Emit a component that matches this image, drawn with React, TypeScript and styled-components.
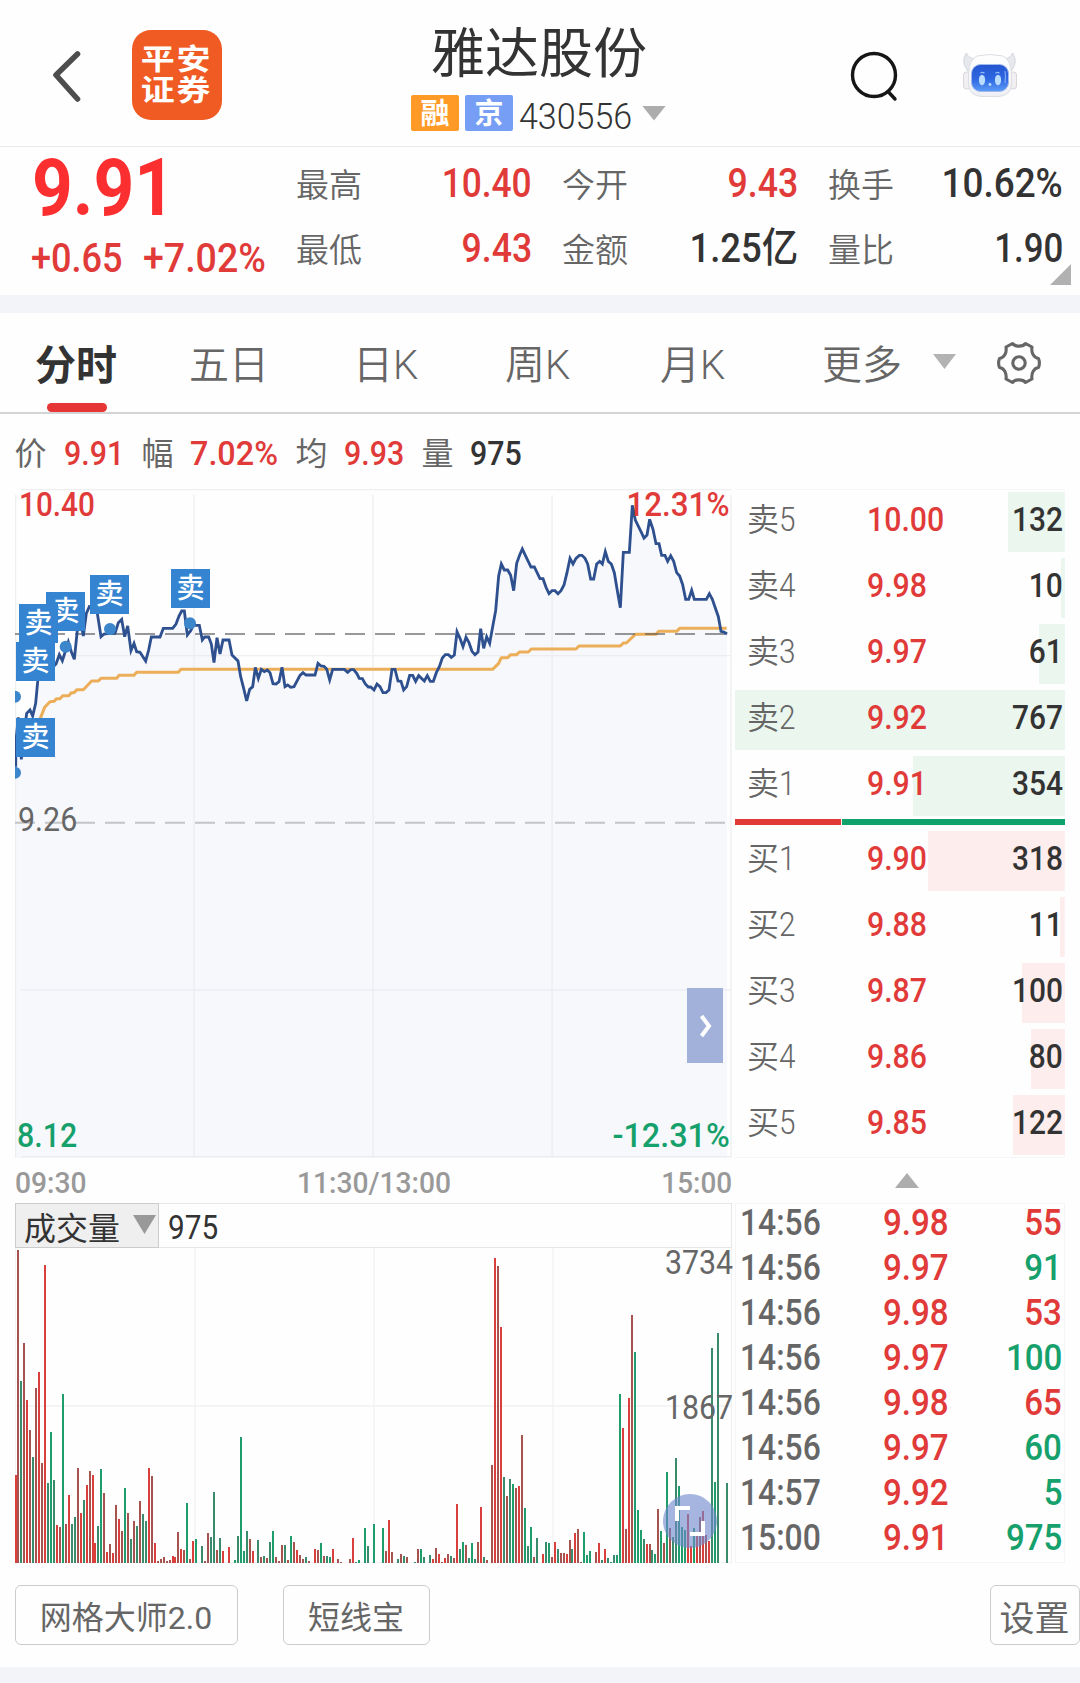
import React from 'react';
import styled, { createGlobalStyle } from 'styled-components';

const RED = '#e03a39';
const GREEN = '#16a06b';
const INK = '#333333';
const GREY = '#666666';

const Global = createGlobalStyle`
  * { box-sizing: border-box; }
  body { margin: 0; background: #fefefe; font-family: Roboto, "Noto Sans CJK SC", sans-serif; color: ${INK}; }
  svg { display: block; }
`;

const Page = styled.div`
  width: 1080px;
  height: 1683px;
  display: flex;
  flex-direction: column;
  overflow: hidden;
  background: #fefefe;
`;

const Num = styled.span<{ $size: number; $color?: string; $weight?: number; $origin?: string; $scale?: number }>`
  display: block;
  white-space: nowrap;
  font-size: ${p => p.$size}px;
  line-height: ${p => p.$size}px;
  font-weight: ${p => p.$weight ?? 500};
  color: ${p => p.$color ?? INK};
  transform: scaleX(${p => p.$scale ?? 0.92});
  transform-origin: ${p => p.$origin ?? 'left'} center;
`;

/* ---------- header ---------- */

const Header = styled.header`
  height: 147px;
  flex: none;
  display: grid;
  grid-template-columns: 132px 90px 189px 299px 370px;
  border-bottom: 1px solid #e9e9e9;
`;

const BackCell = styled.div`padding: 47px 0 0 48px;`;

const Logo = styled.div`
  width: 90px;
  height: 90px;
  margin-top: 30px;
  padding-top: 2px;
  border-radius: 19px;
  background: #f05b24;
  display: flex;
  flex-direction: column;
  align-items: center;
  justify-content: center;
`;

const LogoText = styled.div`
  color: #fff;
  font-size: 29px;
  line-height: 31px;
  font-weight: 700;
  letter-spacing: 1.5px;
  white-space: nowrap;
  transform: scaleX(1.17);
`;

const TitleCell = styled.div`
  grid-column: 4;
  display: flex;
  flex-direction: column;
`;

const Title = styled.h1`
  margin: 28px 0 0 20px;
  font-size: 54px;
  line-height: 54px;
  font-weight: 400;
  white-space: nowrap;
`;

const CodeRow = styled.div`
  display: flex;
  height: 36px;
  margin-top: 13px;
  align-items: center;
`;

const Badge = styled.span<{ $bg: string }>`
  width: 48px;
  height: 36px;
  margin-right: 6px;
  border-radius: 2px;
  background: ${p => p.$bg};
  color: #fff;
  font-size: 29px;
  line-height: 39px;
  font-weight: 600;
  text-align: center;
`;

const CodeBox = styled.div`width: 123px; padding-top: 7px;`;

const Triangle = styled.i<{ $w: number; $h: number; $color?: string; $up?: boolean }>`
  display: block;
  flex: none;
  width: ${p => p.$w}px;
  height: ${p => p.$h}px;
  background: ${p => p.$color ?? '#adadad'};
  clip-path: ${p => (p.$up ? 'polygon(50% 0, 100% 100%, 0 100%)' : 'polygon(0 0, 100% 0, 50% 100%)')};
`;

const Actions = styled.div`
  display: flex;
  padding: 50px 0 0 140px;
  gap: 63px;
`;

const BackIcon = () => (
  <svg width="36" height="56" viewBox="0 0 36 56" fill="none">
    <path d="M29.5 7 L8 28 L29.500 52" stroke="#4d4d4d" strokeWidth="5.6" strokeLinecap="round" strokeLinejoin="round" />
  </svg>
);

const SearchIcon = () => (
  <svg width="50" height="54" viewBox="0 0 50 54" fill="none">
    <circle cx="24" cy="25" r="21.5" stroke="#161616" strokeWidth="3.4" />
    <path d="M38.5 42 L45 49" stroke="#161616" strokeWidth="3.4" strokeLinecap="round" />
  </svg>
);

const RobotIcon = () => (
  <svg width="54" height="48" viewBox="0 0 54 48">
    <defs>
      <linearGradient id="face" x1="0" y1="0" x2="0" y2="1">
        <stop offset="0" stopColor="#2355cf" />
        <stop offset="0.55" stopColor="#2f68e2" />
        <stop offset="1" stopColor="#5d9bf6" />
      </linearGradient>
      <linearGradient id="shell" x1="0" y1="0" x2="0" y2="1">
        <stop offset="0" stopColor="#ffffff" />
        <stop offset="1" stopColor="#eef0f4" />
      </linearGradient>
    </defs>
    <path d="M3.500 3 C-0.500 9 0 15 5 21 L14 9 C8 9 5 7 3.500 3Z M49.500 3 C53.500 9 53 15 48 21 L39 9 C45 9 48 7 49.500 3Z" fill="#e6e8ed" stroke="#cdd0d7" strokeWidth="0.9" />
    <rect x="0.500" y="22" width="7" height="17" rx="3" fill="#f1eff2" stroke="#d5d3d8" strokeWidth="0.9" />
    <rect x="46.500" y="22" width="7" height="17" rx="3" fill="#f1eff2" stroke="#d5d3d8" strokeWidth="0.9" />
    <path d="M14 6 Q27 3 40 6 Q48 10 48.500 24 V34 Q48 46 35 46.500 H19 Q6 46 5.500 34 V24 Q6 10 14 6Z" fill="url(#shell)" stroke="#dcdee3" strokeWidth="1" />
    <rect x="8.500" y="14.500" width="37" height="27" rx="9" fill="url(#face)" stroke="#9fb8ee" strokeWidth="1" />
    <ellipse cx="19" cy="30" rx="3.100" ry="5.200" fill="#b9dcff" />
    <ellipse cx="35" cy="30" rx="3.100" ry="5.200" fill="#b9dcff" />
    <path d="M17.500 23.200 q2 -1.500 4 0 M32.500 23.200 q2 -1.500 4 0" stroke="#8fb8fa" strokeWidth="1.200" fill="none" />
    <circle cx="27" cy="34.500" r="1.400" fill="#b9dcff" />
    <path d="M42 21 q1 5 0 12" stroke="#7fa8f2" strokeWidth="1.200" fill="none" />
  </svg>
);

/* ---------- quote summary ---------- */

const Quote = styled.section`
  height: 148px;
  flex: none;
  position: relative;
  display: grid;
  grid-template-columns: 296px 236px 30px 236px 30px 235px;
`;

const PriceCell = styled.div`padding: 2px 0 0 32px;`;

const Change = styled.div`
  display: grid;
  grid-template-columns: 112px 130px;
  margin: 10px 0 0 -1px;
`;

const StatColumn = styled.div`
  display: flex;
  flex-direction: column;
  padding-top: 12px;
`;

const Stat = styled.div`
  height: 65px;
  display: flex;
  justify-content: space-between;
  align-items: flex-start;
`;

const StatLabel = styled.span`
  padding-top: 10px;
  font-size: 33px;
  line-height: 33px;
  font-weight: 350;
  color: ${GREY};
`;

const StatValue = styled.div`padding-top: 4px;`;

const Corner = styled.i`
  position: absolute;
  right: 9px;
  bottom: 10px;
  width: 21px;
  height: 21px;
  background: #b1b1b1;
  clip-path: polygon(100% 0, 100% 100%, 0 100%);
`;

const Band = styled.div<{ $h: number }>`
  height: ${p => p.$h}px;
  flex: none;
  background: #f3f4f9;
`;

/* ---------- tabs ---------- */

const Tabs = styled.nav`
  height: 101px;
  flex: none;
  display: grid;
  grid-template-columns: 154px 167px 149px 155px 163px 144px 64px 84px;
  border-bottom: 2px solid #d4d4d4;
`;

const Tab = styled.div<{ $active?: boolean; $left: number }>`
  display: flex;
  flex-direction: column;
  justify-content: space-between;
  padding: 32px 0 0 ${p => p.$left}px;
  font-size: ${p => (p.$active ? 41 : 40)}px;
  line-height: 42px;
  white-space: nowrap;
  font-weight: ${p => (p.$active ? 700 : 350)};
  color: ${p => (p.$active ? INK : GREY)};
`;

const Underline = styled.i`
  width: 60px;
  height: 9px;
  margin-left: 12px;
  border-radius: 5px;
  background: #e63535;
`;

const TabIcon = styled.div<{ $top: number }>`padding: ${p => p.$top}px 0 0 1px;`;

const GearIcon = () => (
  <svg width="44" height="44" viewBox="0 0 44 44" fill="none" stroke="#666" strokeWidth="3.1" strokeLinejoin="round">
    <path d="M15.500 2.500 C18 6 26 6 28.500 2.500 L35 6 C34 12 37 17 41.500 17.500 C42.500 20 42.500 24 41.500 26.500 C37 27 34 32 35 38 L28.500 41.500 C26 38 18 38 15.500 41.500 L9 38 C10 32 7 27 2.500 26.500 C1.500 24 1.500 20 2.500 17.500 C7 17 10 12 9 6 Z" />
    <circle cx="22" cy="22" r="6.200" />
  </svg>
);

/* ---------- info line ---------- */

const InfoLine = styled.div`
  height: 75px;
  flex: none;
  display: grid;
  grid-template-columns: 49px 78px 48px 106px 48px 78px 48px 100px;
  padding: 23px 0 0 15px;
`;

const InfoLabel = styled.span`
  margin-left: -0.5px;
  font-size: 32px;
  line-height: 34px;
  color: ${GREY};
`;

/* ---------- market body ---------- */

const Body = styled.main`
  height: 1074px;
  flex: none;
  display: grid;
  grid-template-columns: 717px 330px;
  column-gap: 3px;
  padding-left: 15px;
`;

const Column = styled.div`
  display: flex;
  flex-direction: column;
`;

const ChartBox = styled.div`
  position: relative;
  height: 669px;
  flex: none;
`;

const Overlay = styled.div<{ $x?: number; $r?: number; $y: number }>`
  position: absolute;
  ${p => (p.$x !== undefined ? `left: ${p.$x}px;` : `right: ${p.$r}px;`)}
  top: ${p => p.$y}px;
`;

const SellTag = styled.span`
  position: absolute;
  width: 39px;
  height: 39px;
  background: #3484d2;
  color: #fff;
  font-size: 28px;
  line-height: 40px;
  font-weight: 500;
  text-align: center;
`;

const Expander = styled.button`
  position: absolute;
  left: 672px;
  top: 499px;
  width: 36px;
  height: 75px;
  padding: 0 0 0 2px;
  border: 0;
  background: #a1b1d9;
  display: flex;
  align-items: center;
  justify-content: center;
`;

const TimeAxis = styled.div`
  height: 45px;
  flex: none;
  display: flex;
  justify-content: space-between;
  padding: 10px 0 0 0;
`;

const VolumeHead = styled.div`
  height: 45px;
  flex: none;
  width: 717px;
  display: flex;
  align-items: center;
  border: 1px solid #e6e6e6;
  border-left: 0;
`;

const VolumeSelect = styled.div`
  width: 144px;
  height: 45px;
  display: flex;
  padding: 8px 0 0 8px;
  background: #efefef;
  border: 1px solid #cccccc;
  font-size: 32px;
  line-height: 34px;
  white-space: nowrap;
`;

const SelectArrow = styled.div`margin: 3px 0 0 13px;`;

const VolumeValue = styled.div`padding: 4px 0 0 9px;`;

const VolumeBox = styled.div`
  position: relative;
  height: 315px;
  flex: none;
`;

const BookPanel = styled.div`
  height: 669px;
  flex: none;
  border: 1px solid #f5f5f6;
  border-width: 1px 0;
  padding-top: 2px;
`;

const BookRow = styled.div<{ $fill: number; $bg: string }>`
  height: 60px;
  margin-bottom: 6px;
  display: grid;
  grid-template-columns: 132px 100px 96px;
  background: linear-gradient(${p => p.$bg}, ${p => p.$bg}) right / ${p => p.$fill}% 100% no-repeat;
`;

const BookLabel = styled.div`
  padding: 11px 0 0 12px;
  display: flex;
  color: ${GREY};
  font-size: 32px;
  line-height: 34px;
  font-weight: 350;
`;

const BookCell = styled.div<{ $end?: boolean }>`
  padding-top: 10px;
  display: flex;
  justify-content: ${p => (p.$end ? 'flex-end' : 'flex-start')};
`;

const Ratio = styled.div`
  display: grid;
  grid-template-columns: 106px 1fr;
  column-gap: 1px;
  height: 6px;
  margin: -3px 0 6px;
`;

const RatioPart = styled.i<{ $bg: string }>`background: ${p => p.$bg};`;

const Collapse = styled.div`
  height: 45px;
  flex: none;
  padding: 15px 0 0 160px;
`;

const TickPanel = styled.div`
  height: 360px;
  flex: none;
  padding-top: 1px;
  border: 1px solid #f5f5f6;
`;

const Tick = styled.div`
  height: 45px;
  display: grid;
  grid-template-columns: 140px 90px 96px;
`;

const TickCell = styled.div<{ $end?: boolean; $left?: number }>`
  display: flex;
  padding: 0 0 0 ${p => p.$left ?? 0}px;
  justify-content: ${p => (p.$end ? 'flex-end' : 'flex-start')};
`;

/* ---------- footer ---------- */

const Footer = styled.footer`
  height: 104px;
  flex: none;
  display: flex;
  align-items: flex-start;
  padding: 22px 0 0 15px;
`;

const FootButton = styled.button<{ $w: number; $ml?: string; $size?: number; $top?: number }>`
  width: ${p => p.$w}px;
  height: 60px;
  margin: 0 0 0 ${p => p.$ml ?? '0'};
  padding: ${p => p.$top ?? 6}px 1px 0 0;
  border: 1.5px solid #cccccc;
  border-radius: 6px;
  background: #fefefe;
  color: ${GREY};
  font-family: inherit;
  font-size: ${p => p.$size ?? 32}px;
  line-height: 40px;
  white-space: nowrap;
`;

/* ---------- data ---------- */

// Chart coordinates are in thirds of a pixel.
const PRICE =
  '47,860 48,780 55,712 64,838 72,760 80,700 90,690 98,708 107,670 113,605 117,545 130,530 150,556 160,560 168,552 178,524 187,542 205,486 214,515 223,538 232,450 241,420 250,468 259,400 268,380 277,384 292,400 303,470 312,462 327,460 345,460 355,428 365,418 374,470 383,438 393,512 402,490 410,515 420,517 437,543 446,510 454,471 480,471 490,445 518,445 528,432 537,408 545,393 553,393 562,465 572,452 580,436 598,436 607,480 614,471 626,471 634,492 642,548 651,473 660,522 669,480 687,480 696,525 705,534 714,543 722,590 731,625 740,663 749,628 758,620 766,562 775,595 784,568 793,575 802,570 810,578 819,611 828,612 837,605 846,562 855,620 863,615 872,622 882,620 900,586 909,578 918,585 945,585 954,550 963,558 972,559 980,567 989,600 998,568 1033,568 1043,577 1052,569 1061,569 1070,580 1078,595 1087,596 1096,612 1105,621 ' +
  '1112,621 1122,630 1131,612 1140,620 1149,638 1158,638 1167,630 1176,568 1185,568 1194,603 1203,604 1211,630 1220,620 1229,586 1238,586 1247,604 1256,587 1273,603 1282,587 1291,604 1300,604 1309,578 1318,560 1327,534 1336,524 1345,524 1354,532 1363,525 1371,455 1380,475 1389,500 1398,472 1407,488 1416,514 1425,524 1434,516 1442,446 1451,505 1460,470 1469,490 1478,440 1487,392 1496,288 1504,252 1513,270 1523,270 1532,286 1541,332 1550,250 1559,225 1567,207 1576,226 1593,261 1603,261 1620,296 1629,296 1638,322 1647,341 1656,332 1665,332 1674,341 1683,332 1692,315 1701,278 1710,235 1719,252 1728,235 1738,226 1746,226 1755,235 1763,252 1772,297 1781,297 1790,252 1799,244 1807,252 1816,215 1825,244 1834,252 1843,278 1852,332 1861,383 1870,217 1888,217 1897,76 1906,120 1923,155 1932,174 1941,165 1949,118 1959,148 1968,191 1977,191 1985,226 1995,226 2003,244 2012,227 2021,244 2030,278 2039,288 2048,314 2057,358 2066,358 2075,331 2083,358 2119,358 2128,341 2137,358 2146,384 2155,410 2163,454 2172,456 2181,462';

const AVERAGE =
  '112,740 122,712 134,682 150,665 162,664 170,656 180,656 188,647 207,647 214,638 222,638 231,629 250,629 275,603 295,603 303,595 350,595 357,586 402,586 410,577 535,577 543,568 1478,568 1496,550 1504,533 1523,533 1532,524 1550,524 1558,516 1585,516 1594,507 1728,507 1737,498 1861,498 1870,489 1879,489 1906,463 1968,463 1976,454 2030,454 2039,445 2180,445';

const BAR_COLORS: Record<string, string> = { R: '#db3f3b', r: '#a6524f', G: '#1f9d6c', g: '#3a8b6b' };

const BARS =
  '48,1005,R 54,330,r 63,723,g 72,609,r 81,780,R 90,870,r 99,951,g 108,744,r 117,696,R 126,969,r 135,375,R 144,1029,g 153,876,G 162,1020,g 171,1155,R 180,1161,r 189,762,G 198,1152,r 207,1065,R 216,1152,g 225,1131,g 234,984,r 243,1119,R 252,1080,g 261,1035,R 270,993,r 279,1005,R 285,1209,R 294,1158,g 303,987,G 312,1059,r 321,1236,R 330,1212,r 339,1239,R 348,1095,r 357,1137,R 366,1173,r 375,1044,G 384,1119,r 393,1197,g 402,1143,r 411,1158,g 420,1083,r 429,1122,g 438,1143,g 447,984,R 456,1008,r 465,1209,R 474,1263,r 483,1257,r 492,1251,r 501,1263,r 510,1260,r 519,1248,R 525,1251,R 534,1176,r 543,1227,R 552,1230,r 561,1089,G 570,1257,r 579,1203,R 588,1197,G 606,1218,g 615,1263,r 624,1179,r 633,1191,g 642,1056,g 651,1230,r 660,1194,g 669,1233,R 687,1221,R 705,1260,G 714,1188,g 723,891,G 732,1233,G 741,1173,g 750,1197,r 759,1233,R 774,1200,g 783,1251,r 792,1248,g 801,1254,r 810,1206,g 819,1173,G 828,1251,r 837,1263,r 846,1215,r 855,1215,g 864,1260,r 873,1188,G 882,1206,r 891,1230,R 900,1245,r 909,1257,r 918,1251,g 927,1263,r 945,1227,R 954,1230,r 963,1209,G 972,1248,r 981,1248,g 990,1251,G 999,1227,R 1014,1257,r 1023,1266,r 1050,1257,r 1059,1194,R 1068,1266,g 1077,1260,G 1095,1164,G 1104,1218,g ' +
  '1122,1152,G 1149,1164,G 1158,1233,r 1167,1140,R 1176,1236,r 1194,1257,g 1203,1242,r 1212,1248,g 1221,1251,r 1245,1266,g 1254,1227,r 1263,1227,G 1272,1251,g 1290,1245,g 1299,1257,R 1308,1224,r 1317,1242,R 1326,1266,r 1335,1254,R 1344,1242,r 1353,1248,g 1362,1254,r 1371,1092,R 1380,1227,g 1389,1206,G 1398,1215,r 1407,1254,g 1416,1209,G 1425,1257,g 1434,1206,r 1443,1101,R 1452,1251,g 1461,1260,r 1476,975,r 1485,354,R 1494,378,r 1503,561,R 1512,1011,g 1521,1068,r 1530,1017,g 1539,1032,G 1548,1044,r 1557,1038,R 1566,885,r 1575,1104,G 1584,1218,g 1593,1161,G 1602,1251,r 1611,1194,g 1629,1242,R 1638,1206,g 1647,1209,G 1656,1251,r 1665,1206,R 1674,1227,g 1683,1239,r 1692,1239,r 1701,1242,R 1710,1200,r 1716,1227,g 1725,1179,R 1734,1167,r 1743,1266,r 1752,1176,G 1761,1245,G 1770,1233,G 1788,1236,r 1797,1209,R 1806,1260,g 1815,1227,R 1824,1254,g 1833,1266,G 1842,1245,g 1851,1245,G 1860,762,G 1869,864,R 1878,1167,r 1887,774,R 1896,525,r 1905,636,G 1914,1110,G 1923,1170,G 1932,1197,g 1941,1212,R 1950,1212,r 1956,1230,g 1965,1242,G 1974,1107,r 1983,1173,G 1992,1209,r 2001,996,G 2010,1164,r 2019,1191,g 2028,954,g 2037,1038,G 2046,1161,G 2055,1170,G 2064,1122,R 2073,1218,R 2082,1164,G 2091,1188,R 2100,1131,r 2109,1113,R 2118,1185,r 2127,1203,R 2136,624,g 2145,1026,G 2154,579,g 2181,1029,g';

const TAGS: Array<[number, number]> = [
  [31, 104],
  [4, 116],
  [1, 154],
  [1, 230],
  [75, 87],
  [156, 81],
];

const DOTS: Array<[number, number]> = [
  [330, 447],
  [570, 430],
  [197, 500],
  [45, 650],
  [45, 878],
];

const MAX_LOT = 767;
const ASKS: Array<[string, string, number]> = [
  ['5', '10.00', 132],
  ['4', '9.98', 10],
  ['3', '9.97', 61],
  ['2', '9.92', 767],
  ['1', '9.91', 354],
];
const BIDS: Array<[string, string, number]> = [
  ['1', '9.90', 318],
  ['2', '9.88', 11],
  ['3', '9.87', 100],
  ['4', '9.86', 80],
  ['5', '9.85', 122],
];
const TICKS: Array<[string, string, string, string]> = [
  ['14:56', '9.98', '55', RED],
  ['14:56', '9.97', '91', GREEN],
  ['14:56', '9.98', '53', RED],
  ['14:56', '9.97', '100', GREEN],
  ['14:56', '9.98', '65', RED],
  ['14:56', '9.97', '60', GREEN],
  ['14:57', '9.92', '5', GREEN],
  ['15:00', '9.91', '975', GREEN],
];

const STATS: Array<Array<[string, string, string, number]>> = [
  [['最高', '10.40', RED, 0.86], ['最低', '9.43', RED, 0.87]],
  [['今开', '9.43', RED, 0.87], ['金额', '1.25亿', INK, 0.89]],
  [['换手', '10.62%', INK, 0.9], ['量比', '1.90', INK, 0.85]],
];

const PriceChart = () => (
  <svg width="717" height="669" viewBox="0 0 2151 2007">
    <g transform="translate(-45 -27)">
      <path d={`M47,2054 L${PRICE.replace(/ /g, ' L')} L2181,2054 Z`} fill="#f6f8fc" />
      <path d="M63 28.500 H2195 M46.500 45 V2054 M582 45 V2054 M1119 45 V2054 M1656 45 V2054 M2193 45 V2054 M63 527 H2195 M63 1530 H2195 M63 2030 H2195" stroke="#e9eaee" strokeOpacity="0.75" strokeWidth="4" fill="none" />
      <path d="M45 1028.500 H2178" stroke="#c3c4c7" strokeWidth="6" strokeDasharray="60 30" />
      <polyline points={AVERAGE} fill="none" stroke="#ecae58" strokeWidth="9" strokeLinejoin="round" />
      <path d="M45 462 H2178" stroke="#58585c" strokeOpacity="0.62" strokeWidth="6" strokeDasharray="60 30" />
      <polyline points={PRICE} fill="none" stroke="#2f508f" strokeWidth="8.500" strokeLinejoin="miter" />
      {DOTS.map(([x, y]) => (
        <circle key={`${x}-${y}`} cx={x} cy={y} r="18" fill="#3c86cb" />
      ))}
    </g>
  </svg>
);

const VolumeChart = () => (
  <svg width="717" height="315" viewBox="0 0 2151 945">
    <g transform="translate(-45 -324)">
      <path d="M585 324 V1269 M1122 324 V1269 M1659 324 V1269 M2194 324 V1269 M46 324 V1269 M46 798 H2194 M46 1268 H2194" stroke="#f2f2f3" strokeWidth="4" fill="none" />
      {BARS.split(' ').map((b) => {
        const [x, y, c] = b.split(',');
        return <rect key={x} x={Number(x) - 3} y={y} width="6" height={1269 - Number(y)} fill={BAR_COLORS[c]} />;
      })}
      <circle cx="2070" cy="1143" r="81" fill="#7088cb" fillOpacity="0.62" />
      <path d="M2031 1143 V1104 H2070 M2070 1182 H2109 V1143" fill="none" stroke="#fff" strokeWidth="12" />
    </g>
  </svg>
);

const Book = ({ side, rows, bg }: { side: string; rows: Array<[string, string, number]>; bg: string }) => (
  <>
    {rows.map(([level, price, lots]) => (
      <BookRow key={level} $fill={Math.max(1.2, (lots / MAX_LOT) * 100)} $bg={bg}>
        <BookLabel>
          {side}
          <Num $size={33} $weight={350} $color={GREY} $scale={0.9}>{level}</Num>
        </BookLabel>
        <BookCell><Num $size={34} $color={RED} $scale={0.89}>{price}</Num></BookCell>
        <BookCell $end><Num $size={34} $origin="right" $scale={0.88}>{lots}</Num></BookCell>
      </BookRow>
    ))}
  </>
);

export default function App() {
  return (
    <Page>
      <Global />
      <Header>
        <BackCell><BackIcon /></BackCell>
        <Logo>
          <LogoText>平安</LogoText>
          <LogoText>证券</LogoText>
        </Logo>
        <TitleCell>
          <Title>雅达股份</Title>
          <CodeRow>
            <Badge $bg="#ff9a26">融</Badge>
            <Badge $bg="#769ef5">京</Badge>
            <CodeBox><Num $size={36} $weight={350} $scale={0.945}>430556</Num></CodeBox>
            <Triangle $w={24} $h={15} />
          </CodeRow>
        </TitleCell>
        <Actions>
          <SearchIcon />
          <RobotIcon />
        </Actions>
      </Header>

      <Quote>
        <PriceCell>
          <Num $size={79} $weight={700} $color="#fb2f2f" $scale={0.9}>9.91</Num>
          <Change>
            <Num $size={41} $color={RED} $scale={0.88}>+0.65</Num>
            <Num $size={41} $color={RED} $scale={0.915}>+7.02%</Num>
          </Change>
        </PriceCell>
        {STATS.map((column, i) => (
          <React.Fragment key={i}>
            {i > 0 && <span />}
            <StatColumn>
              {column.map(([label, value, color, scale]) => (
                <Stat key={label}>
                  <StatLabel>{label}</StatLabel>
                  <StatValue><Num $size={41} $color={color} $origin="right" $scale={scale}>{value}</Num></StatValue>
                </Stat>
              ))}
            </StatColumn>
          </React.Fragment>
        ))}
        <Corner />
      </Quote>

      <Band $h={18} />

      <Tabs>
        <Tab $active $left={35}>分时<Underline /></Tab>
        <Tab $left={35}>五日</Tab>
        <Tab $left={32}>日K</Tab>
        <Tab $left={35}>周K</Tab>
        <Tab $left={35}>月K</Tab>
        <Tab $left={34}>更多</Tab>
        <TabIcon $top={41}><Triangle $w={23} $h={15} $color="#b3b3b3" /></TabIcon>
        <TabIcon $top={28}><GearIcon /></TabIcon>
      </Tabs>

      <InfoLine>
        <InfoLabel>价</InfoLabel>
        <Num $size={33} $color={RED}>9.91</Num>
        <InfoLabel>幅</InfoLabel>
        <Num $size={33} $color={RED} $scale={0.98}>7.02%</Num>
        <InfoLabel>均</InfoLabel>
        <Num $size={33} $color={RED}>9.93</Num>
        <InfoLabel>量</InfoLabel>
        <Num $size={33}>975</Num>
      </InfoLine>

      <Body>
        <Column>
          <ChartBox>
            <PriceChart />
            <Overlay $x={4} $y={-1}><Num $size={33} $color={RED} $scale={0.9}>10.40</Num></Overlay>
            <Overlay $r={3} $y={-1}><Num $size={33} $color={RED} $origin="right" $scale={0.95}>12.31%</Num></Overlay>
            <Overlay $x={3} $y={314}><Num $size={33} $color={GREY} $weight={400}>9.26</Num></Overlay>
            <Overlay $x={2} $y={630}><Num $size={33} $color={GREEN}>8.12</Num></Overlay>
            <Overlay $r={2} $y={630}><Num $size={33} $color={GREEN} $origin="right" $scale={0.98}>-12.31%</Num></Overlay>
            {TAGS.map(([x, y]) => (
              <SellTag key={`${x}-${y}`} style={{ left: x, top: y - 1 }}>卖</SellTag>
            ))}
            <Expander>
              <svg width="14" height="24" viewBox="0 0 14 24" fill="none">
                <path d="M2.500 2 L10 12 L2.500 22" stroke="#fff" strokeWidth="4" />
              </svg>
            </Expander>
          </ChartBox>
          <TimeAxis>
            <Num $size={30} $color="#999" $scale={0.94}>09:30</Num>
            <Num $size={30} $color="#999" $origin="center" $scale={0.94}>11:30/13:00</Num>
            <Num $size={30} $color="#999" $origin="right" $scale={0.93}>15:00</Num>
          </TimeAxis>
          <VolumeHead>
            <VolumeSelect>
              成交量
              <SelectArrow><Triangle $w={23} $h={19} $color="#999" /></SelectArrow>
            </VolumeSelect>
            <VolumeValue><Num $size={33} $weight={400} $scale={0.9}>975</Num></VolumeValue>
          </VolumeHead>
          <VolumeBox>
            <VolumeChart />
            <Overlay $r={-1} $y={-2}><Num $size={33} $color={GREY} $weight={400} $origin="right">3734</Num></Overlay>
            <Overlay $r={-1} $y={143}><Num $size={33} $color={GREY} $weight={400} $origin="right">1867</Num></Overlay>
          </VolumeBox>
        </Column>

        <Column>
          <BookPanel>
            <Book side="卖" rows={ASKS} bg="#eaf6ee" />
            <Ratio>
              <RatioPart $bg="#e23a37" />
              <RatioPart $bg="#10a26b" />
            </Ratio>
            <Book side="买" rows={BIDS} bg="#fdeeed" />
          </BookPanel>
          <Collapse><Triangle $w={24} $h={15} $up /></Collapse>
          <TickPanel>
            {TICKS.map(([time, price, lots, color], i) => (
              <Tick key={i}>
                <TickCell $left={4}><Num $size={36} $color={GREY} $scale={0.885}>{time}</Num></TickCell>
                <TickCell $left={7}><Num $size={36} $color={RED}>{price}</Num></TickCell>
                <TickCell $end><Num $size={36} $color={color} $origin="right">{lots}</Num></TickCell>
              </Tick>
            ))}
          </TickPanel>
        </Column>
      </Body>

      <Footer>
        <FootButton $w={223}>网格大师2.0</FootButton>
        <FootButton $w={147} $ml="45px">短线宝</FootButton>
        <FootButton $w={90} $ml="auto" $size={35} $top={9}>设置</FootButton>
      </Footer>
      <Band $h={16} />
    </Page>
  );
}
